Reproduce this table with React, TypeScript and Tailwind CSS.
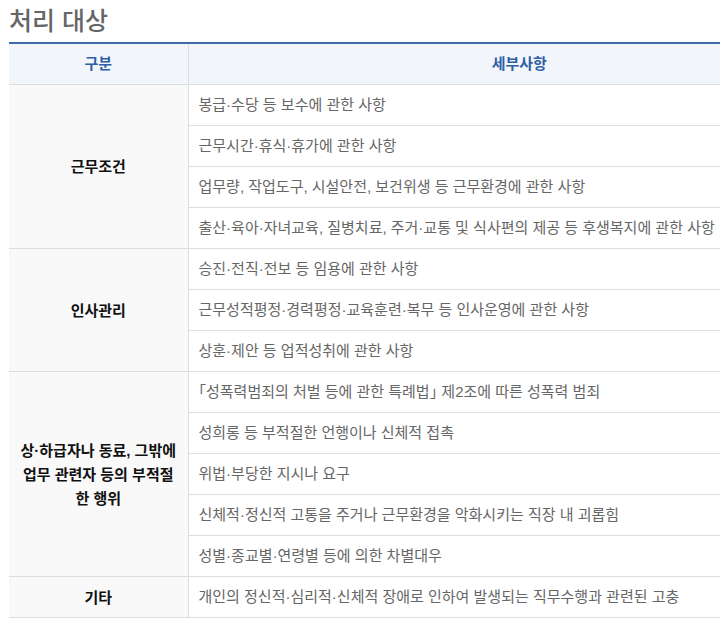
import React from 'react';

const groups = [
  {
    label: '근무조건',
    items: [
      '봉급·수당 등 보수에 관한 사항',
      '근무시간·휴식·휴가에 관한 사항',
      '업무량, 작업도구, 시설안전, 보건위생 등 근무환경에 관한 사항',
      '출산·육아·자녀교육, 질병치료, 주거·교통 및 식사편의 제공 등 후생복지에 관한 사항',
    ],
  },
  {
    label: '인사관리',
    items: [
      '승진·전직·전보 등 임용에 관한 사항',
      '근무성적평정·경력평정·교육훈련·복무 등 인사운영에 관한 사항',
      '상훈·제안 등 업적성취에 관한 사항',
    ],
  },
  {
    label: '상·하급자나 동료, 그밖에 업무 관련자 등의 부적절한 행위',
    items: [
      '「성폭력범죄의 처벌 등에 관한 특례법」 제2조에 따른 성폭력 범죄',
      '성희롱 등 부적절한 언행이나 신체적 접촉',
      '위법·부당한 지시나 요구',
      '신체적·정신적 고통을 주거나 근무환경을 악화시키는 직장 내 괴롭힘',
      '성별·종교별·연령별 등에 의한 차별대우',
    ],
  },
  {
    label: '기타',
    items: ['개인의 정신적·심리적·신체적 장애로 인하여 발생되는 직무수행과 관련된 고충'],
  },
];

const App: React.FC = () => {
  return (
    <div
      className="w-[720px] h-[622px] overflow-hidden bg-white"
      style={{ fontFamily: '"Liberation Sans", "Noto Sans CJK KR", sans-serif' }}
    >
      <h2 className="pl-[9px] pt-[3px] h-[42px] text-[25px] leading-[36px] font-medium text-[#666]">처리 대상</h2>

      <table className="ml-[9px] w-[841px] border-collapse table-fixed border-t-2 border-[#3e6aa8]">
        <colgroup>
          <col className="w-[179px]" />
          <col />
        </colgroup>
        <thead>
          <tr className="h-[41px] bg-[#f2f5fa]">
            <th className="border-b border-[#ddd] text-[15px] font-bold text-[#2f5fa8]">구분</th>
            <th className="border-b border-l border-[#ddd] text-[15px] font-bold text-[#2f5fa8]">세부사항</th>
          </tr>
        </thead>
        <tbody>
          {groups.map((g) =>
            g.items.map((item, i) => (
              <tr key={item} className="h-[41px]">
                {i === 0 && (
                  <td
                    rowSpan={g.items.length}
                    className="bg-[#f9f9f9] border-b border-[#ddd] px-[8px] pt-[2px] text-center text-[15px] leading-[24px] font-bold text-[#111] break-all"
                  >
                    {g.label}
                  </td>
                )}
                <td className="border-b border-l border-[#ddd] pl-[10px] text-[15px] leading-[20px] text-[#666] whitespace-nowrap [font-feature-settings:'halt']">
                  {item}
                </td>
              </tr>
            ))
          )}
        </tbody>
      </table>
    </div>
  );
};

export default App;
